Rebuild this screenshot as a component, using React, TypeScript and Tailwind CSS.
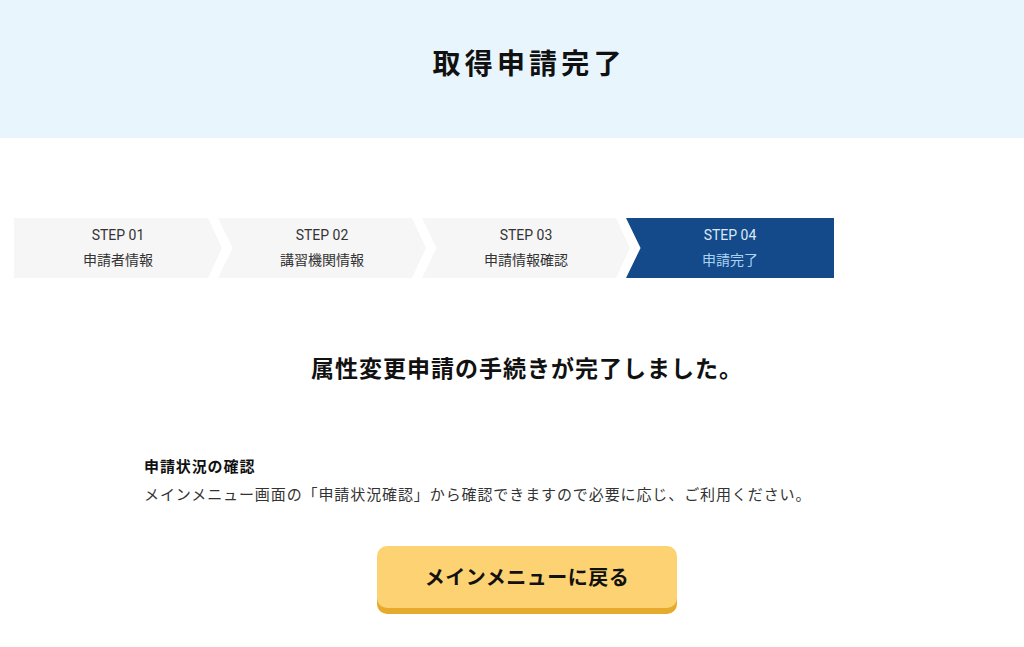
const steps = [
  { no: "01", label: "申請者情報" },
  { no: "02", label: "講習機関情報" },
  { no: "03", label: "申請情報確認" },
  { no: "04", label: "申請完了" },
];

export default function App() {
  return (
    <div className="min-h-screen bg-white font-['Roboto','Noto_Sans_CJK_JP',sans-serif] text-[#222]">
      <header className="flex h-[138px] items-center justify-center bg-[#e8f5fd] pb-[14px] pl-[30px]">
        <h1 className="pl-[0.15em] text-[28px] font-bold tracking-[0.15em] text-[#111] font-['Noto_Sans_CJK_JP',sans-serif]">
          取得申請完了
        </h1>
      </header>

      <ol className="mt-[80px] flex pl-[14px]">
        {steps.map((s, i) => (
          <StepItem key={s.no} no={s.no} label={s.label} index={i} last={i === steps.length - 1} />
        ))}
      </ol>

      <div className="ml-[144px] w-[766px] font-['Noto_Sans_CJK_JP',sans-serif]">
        <h2 className="mt-[72px] text-center text-[23px] font-bold leading-[34px] tracking-[1px] text-[#111]">
          属性変更申請の手続きが完了しました。
        </h2>

        <section className="mt-[68px]">
          <h3 className="text-[15px] font-bold leading-[28px] tracking-[0.06em] text-[#111]">申請状況の確認</h3>
          <p className="text-[15px] leading-[28px] tracking-[0.06em] text-[#333]">
            メインメニュー画面の「申請状況確認」から確認できますので必要に応じ、ご利用ください。
          </p>
        </section>

        <div className="mt-[38px] flex justify-center">
          <button className="h-[62px] w-[300px] rounded-[10px] bg-[#fdd272] text-[20px] font-bold tracking-[0.5px] text-[#111] shadow-[0_6px_0_#e6ab2c]">
            メインメニューに戻る
          </button>
        </div>
      </div>
    </div>
  );
}

function StepItem({ no, label, index, last }: { no: string; label: string; index: number; last: boolean }) {
  const shape =
    index === 0
      ? "[clip-path:polygon(0_0,93.3%_0,100%_50%,93.3%_100%,0_100%)]"
      : last
        ? "[clip-path:polygon(0_0,100%_0,100%_100%,0_100%,7%_50%)]"
        : "[clip-path:polygon(0_0,93.3%_0,100%_50%,93.3%_100%,0_100%,7%_50%)]";
  const active = last;
  return (
    <li
      className={`flex h-[60px] w-[208px] flex-col items-center justify-start pt-[5px] ${index > 0 ? "-ml-[4px]" : ""} ${shape} ${
        active ? "bg-[#154a8a]" : "bg-[#f6f6f6]"
      }`}
    >
      <span className={`text-[14px] leading-[24px] ${active ? "text-[#dbe8f6]" : "text-[#333]"}`}>STEP {no}</span>
      <span
        className={`text-[14px] leading-[24px] font-['Noto_Sans_CJK_JP',sans-serif] ${
          active ? "text-[#a9d2f3]" : "text-[#333]"
        }`}
      >
        {label}
      </span>
    </li>
  );
}
